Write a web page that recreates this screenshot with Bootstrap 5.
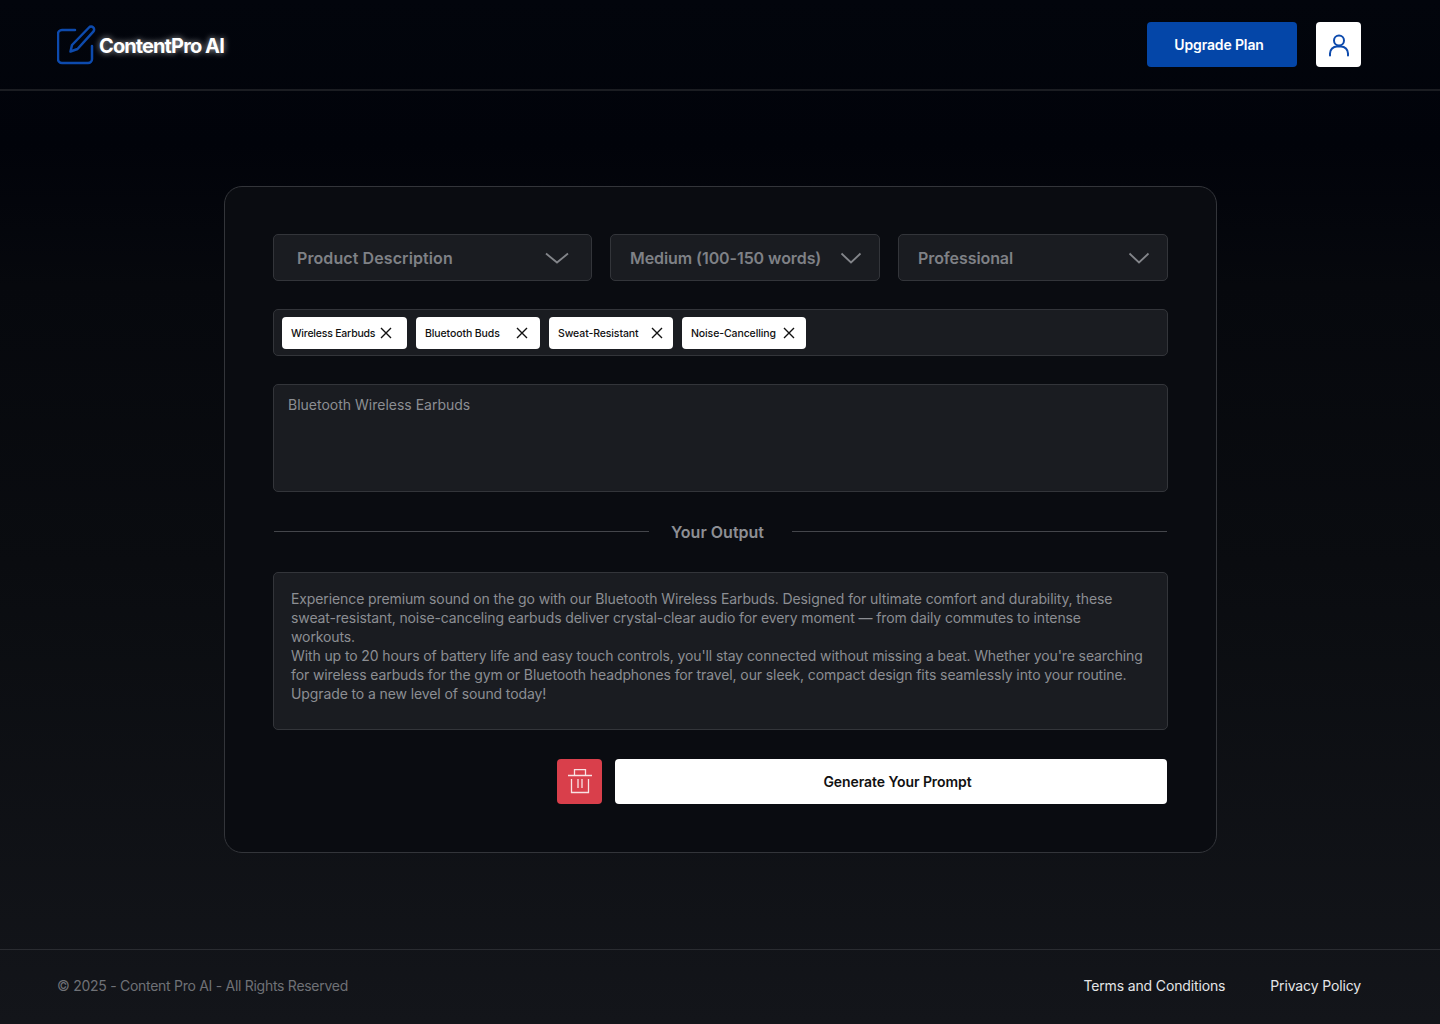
<!DOCTYPE html>
<html lang="en">

<head>
    <meta charset="UTF-8">
    <meta name="viewport" content="width=device-width, initial-scale=1.0">
    <title>ContentPro AI</title>
    <link href="https://cdn.jsdelivr.net/npm/bootstrap@5.3.3/dist/css/bootstrap.min.css" rel="stylesheet">
    <style>
        body {
            min-height: 1024px;
            background: linear-gradient(180deg, #02050c 0%, #01030a 14%, #06080d 28%, #0a0c10 55%, #13151a 100%);
            font-family: Inter, "Noto Sans", sans-serif;
        }

        .top-bar {
            height: 91px;
            padding: 0 79px 0 57px;
            border-bottom: 2px solid #1b1d22;
        }

        .brand-name {
            margin-left: 1px;
            padding-top: 2px;
            font-size: 20px;
            font-weight: 700;
            color: #fff;
            letter-spacing: -0.045em;
            text-shadow: 0 0 6px rgba(255, 255, 255, .7);
        }

        .top-actions {
            gap: 19px;
        }

        .btn-upgrade {
            width: 150px;
            height: 45px;
            padding: 0 6px 0 0;
            background: #0446a8;
            color: #fff;
            font-size: 14px;
            font-weight: 600;
            letter-spacing: -0.01em;
            border: 0;
            border-radius: 4px;
        }

        .btn-user {
            width: 45px;
            height: 45px;
            background: #fff;
            border: 0;
            border-radius: 4px;
            padding: 0;
        }

        .main-area {
            padding: 95px 223px 96px 224px;
        }

        .form-panel {
            height: 667px;
            padding: 47px 48px;
            background: #0a0c11;
            border: 1px solid #33353a;
            border-radius: 18px;
        }

        .field-box {
            background: #1a1c21;
            border: 1px solid #33353a;
            border-radius: 5px;
        }

        .select-box {
            height: 47px;
            color: #7f8186;
            font-size: 16px;
            font-weight: 600;
            padding: 0 17px 0 19px;
        }

        .select-wide {
            width: 319px;
            padding: 0 22px 0 23px;
            letter-spacing: 0.006em;
        }

        .select-mid {
            width: 270px;
            letter-spacing: -0.005em;
        }

        .tags-box {
            height: 47px;
            margin-top: 28px;
            padding: 7px 8px;
            gap: 9px;
        }

        .tag-item {
            width: 124px;
            height: 32px;
            padding: 0 11px 0 9px;
            background: #fff;
            color: #111;
            font-size: 10.5px;
            font-weight: 500;
            letter-spacing: -0.01em;
            border-radius: 4px;
        }

        .tag-item span {
            padding-top: 2px;
        }

        .tag-first {
            width: 125px;
            padding-right: 15px;
            letter-spacing: -0.02em;
        }

        .tag-second {
            padding-right: 12px;
        }

        .tag-third {
            padding-right: 10px;
        }

        .input-box {
            height: 108px;
            margin-top: 28px;
            padding: 9px 14px;
            color: #8c8e93;
            font-size: 14px;
        }

        .output-rule {
            height: 80px;
            color: #8d8f94;
            font-size: 16px;
            font-weight: 600;
            padding: 0 1px;
        }

        .output-rule span {
            margin: 0 28px 0 22px;
        }

        .output-rule i {
            display: block;
            flex: 1;
            height: 1px;
            margin-bottom: 2px;
            background: #44464b;
        }

        .output-box {
            height: 158px;
            padding: 16px 24px 16px 17px;
            color: #8c8e93;
            font-size: 14px;
            line-height: 19px;
            letter-spacing: -0.0076em;
        }

        .action-row {
            margin-top: 29px;
            gap: 13px;
            padding-right: 1px;
        }

        .btn-trash {
            width: 45px;
            height: 45px;
            padding: 0;
            background: #d93f4b;
            border: 0;
            border-radius: 4px;
        }

        .btn-generate {
            width: 552px;
            height: 45px;
            padding: 0 0 0 13px;
            background: #fff;
            color: #111;
            font-size: 14px;
            font-weight: 600;
            letter-spacing: -0.005em;
            border: 0;
            border-radius: 4px;
        }

        .page-foot {
            height: 75px;
            padding: 0 79px 3px 57px;
            border-top: 1px solid #2a2c31;
            font-size: 14px;
        }

        .copy-text {
            color: #6f7176;
            letter-spacing: -0.02em;
        }

        .foot-links {
            gap: 45px;
        }

        .foot-link {
            color: #e4e5e7;
            letter-spacing: -0.01em;
            text-decoration: none;
        }
    </style>
</head>

<body>
    <!-- Header -->
    <header class="top-bar d-flex align-items-center justify-content-between">
        <a href="#" class="d-flex align-items-center text-decoration-none">
            <svg width="41" height="40" viewBox="0 0 41 40" fill="none" stroke="#0d4aad" stroke-width="2.5" stroke-linecap="round" stroke-linejoin="round">
                <path d="M18 5H5a4 4 0 0 0-4 4V34a4 4 0 0 0 4 4H31a4 4 0 0 0 4-4V21"/>
                <path d="M32 2.500a2.900 2.900 0 0 1 4.300 4.100L20.500 24 13.500 26.500l1.500-6.500z"/>
            </svg>
            <span class="brand-name">ContentPro AI</span>
        </a>
        <div class="top-actions d-flex align-items-center">
            <button class="btn-upgrade" type="button">Upgrade Plan</button>
            <button class="btn-user d-flex align-items-center justify-content-center" type="button" aria-label="Account">
                <svg width="22" height="24" viewBox="0 0 22 24" fill="none" stroke="#0d4aad" stroke-width="2" stroke-linecap="round">
                    <circle cx="11" cy="7.500" r="5"/>
                    <path d="M2 22.500v-2a7 7 0 0 1 7-7h4a7 7 0 0 1 7 7v2"/>
                </svg>
            </button>
        </div>
    </header>

    <main class="main-area">
        <section class="form-panel">
            <div class="d-flex justify-content-between">
                <div class="field-box select-box select-wide d-flex align-items-center justify-content-between">
                    <span>Product Description</span>
                    <svg width="24" height="12" viewBox="0 0 24 12" fill="none" stroke="#83858a" stroke-width="1.800"><path d="M1 1.500 12 10.500 23 1.500"/></svg>
                </div>
                <div class="field-box select-box select-mid d-flex align-items-center justify-content-between">
                    <span>Medium (100-150 words)</span>
                    <svg width="22" height="12" viewBox="0 0 22 12" fill="none" stroke="#83858a" stroke-width="1.800"><path d="M1.500 1.500 11 10.500 20.500 1.500"/></svg>
                </div>
                <div class="field-box select-box select-mid d-flex align-items-center justify-content-between">
                    <span>Professional</span>
                    <svg width="22" height="12" viewBox="0 0 22 12" fill="none" stroke="#83858a" stroke-width="1.800"><path d="M1.500 1.500 11 10.500 20.500 1.500"/></svg>
                </div>
            </div>

            <div class="field-box tags-box d-flex align-items-center">
                <div class="tag-item tag-first d-flex align-items-center justify-content-between">
                    <span>Wireless Earbuds</span>
                    <svg width="12" height="12" viewBox="0 0 12 12" stroke="#111" stroke-width="1.400"><path d="M1 1l10 10M11 1 1 11"/></svg>
                </div>
                <div class="tag-item tag-second d-flex align-items-center justify-content-between">
                    <span>Bluetooth Buds</span>
                    <svg width="12" height="12" viewBox="0 0 12 12" stroke="#111" stroke-width="1.400"><path d="M1 1l10 10M11 1 1 11"/></svg>
                </div>
                <div class="tag-item tag-third d-flex align-items-center justify-content-between">
                    <span>Sweat-Resistant</span>
                    <svg width="12" height="12" viewBox="0 0 12 12" stroke="#111" stroke-width="1.400"><path d="M1 1l10 10M11 1 1 11"/></svg>
                </div>
                <div class="tag-item d-flex align-items-center justify-content-between">
                    <span>Noise-Cancelling</span>
                    <svg width="12" height="12" viewBox="0 0 12 12" stroke="#111" stroke-width="1.400"><path d="M1 1l10 10M11 1 1 11"/></svg>
                </div>
            </div>

            <div class="field-box input-box">Bluetooth Wireless Earbuds</div>

            <div class="output-rule d-flex align-items-center">
                <i></i>
                <span>Your Output</span>
                <i></i>
            </div>

            <div class="field-box output-box">
                Experience premium sound on the go with our Bluetooth Wireless Earbuds. Designed for ultimate comfort and durability, these sweat-resistant, noise-canceling earbuds deliver crystal-clear audio for every moment — from daily commutes to intense workouts.<br>
                With up to 20 hours of battery life and easy touch controls, you'll stay connected without missing a beat. Whether you're searching for wireless earbuds for the gym or Bluetooth headphones for travel, our sleek, compact design fits seamlessly into your routine. Upgrade to a new level of sound today!
            </div>

            <div class="action-row d-flex justify-content-end">
                <button class="btn-trash d-flex align-items-center justify-content-center" type="button" aria-label="Delete">
                    <svg width="24" height="25" viewBox="0 0 24 25" fill="none" stroke="#fff" stroke-width="1.300" opacity=".85">
                        <path d="M0 6.500h24M6.500 6V.7h11V6M3.500 10v13.500h17V10M10 10v9M14 10v9"/>
                    </svg>
                </button>
                <button class="btn-generate" type="button">Generate Your Prompt</button>
            </div>
        </section>
    </main>

    <footer class="page-foot d-flex align-items-center justify-content-between">
        <span class="copy-text">© 2025 - Content Pro AI - All Rights Reserved</span>
        <div class="foot-links d-flex">
            <a class="foot-link" href="#">Terms and Conditions</a>
            <a class="foot-link" href="#">Privacy Policy</a>
        </div>
    </footer>

    <script src="https://cdn.jsdelivr.net/npm/bootstrap@5.3.3/dist/js/bootstrap.bundle.min.js"></script>
</body>

</html>
